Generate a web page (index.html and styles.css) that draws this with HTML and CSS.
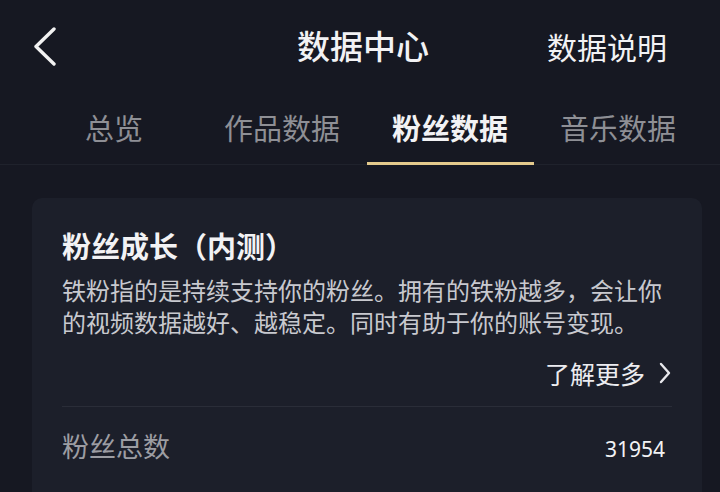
FILE: index.html
```html
<!DOCTYPE html>
<html>
<head>
    <meta charset="utf-8">
    <title>数据中心</title>
    <link rel="stylesheet" href="styles.css">
</head>
<body>
    <div class="page">
        <header class="nav-bar">
            <a class="back-btn" href="#">
                <svg width="24" height="40" viewBox="0 0 24 40">
                    <polyline points="21,3 3,20.5 21,38" fill="none" stroke="#f2f2f2" stroke-width="3.4" stroke-linecap="round" stroke-linejoin="round"/>
                </svg>
            </a>
            <h1 class="nav-title">数据中心</h1>
            <a class="nav-link" href="#">数据说明</a>
        </header>

        <nav class="tabs">
            <div class="tab">总览</div>
            <div class="tab">作品数据</div>
            <div class="tab active">粉丝数据</div>
            <div class="tab">音乐数据</div>
        </nav>

        <section class="card">
            <h2 class="card-title">粉丝成长（内测）</h2>
            <p class="card-desc">铁粉指的是持续支持你的粉丝。拥有的铁粉越多，会让你的视频数据越好、越稳定。同时有助于你的账号变现。</p>
            <div class="more-row">
                <a class="more-link" href="#">了解更多
                    <svg width="14" height="22" viewBox="0 0 14 22">
                        <polyline points="3,2 11,11 3,20" fill="none" stroke="#e8e8ec" stroke-width="2.4" stroke-linecap="round" stroke-linejoin="round"/>
                    </svg>
                </a>
            </div>
            <div class="stat-row">
                <span class="stat-label">粉丝总数</span>
                <span class="stat-value">31954</span>
            </div>
        </section>
    </div>
</body>
</html>
```

FILE: styles.css
```css
:root {
    --bg: #161822;
    --card: #1c1f2a;
    --text: #f2f2f4;
    --muted: #8e8f95;
    --gold: #e3c98c;
}
html, body {
    margin: 0;
    padding: 0;
}
body {
    background: var(--bg);
    color: var(--text);
    font-family: "Noto Sans CJK SC", "Noto Sans", sans-serif;
    width: 720px;
    height: 492px;
    overflow: hidden;
}
a {
    color: inherit;
    text-decoration: none;
}
.nav-bar {
    display: flex;
    align-items: center;
    height: 92px;
    padding: 0 53px 0 33px;
}
.back-btn {
    display: flex;
    width: 24px;
    height: 40px;
}
.nav-title {
    flex: 1;
    margin: -2px 0 0 122px;
    text-align: center;
    font-size: 33px;
    font-weight: 500;
    line-height: 40px;
}
.nav-link {
    font-size: 30px;
    line-height: 40px;
}
.tabs {
    display: flex;
    padding: 0 18px 0 30px;
    border-bottom: 1px solid #1f222c;
}
.tab {
    position: relative;
    width: 168px;
    padding: 17px 0 19px;
    text-align: center;
    font-size: 29px;
    line-height: 36px;
    color: var(--muted);
}
.tab.active {
    color: var(--text);
    font-weight: 700;
}
.tab.active::after {
    content: "";
    position: absolute;
    left: 1px;
    right: 0;
    bottom: -1px;
    height: 3px;
    background: var(--gold);
}
.card {
    margin: 33px 18px 0 32px;
    padding: 27px 30px 40px;
    background: var(--card);
    border-radius: 10px;
}
.card-title {
    margin: 0;
    font-size: 29px;
    font-weight: 700;
    line-height: 40px;
}
.card-desc {
    margin: 9px 0 0;
    font-size: 24px;
    line-height: 32px;
    color: #c8c9cf;
}
.more-row {
    display: flex;
    justify-content: flex-end;
    margin-top: 19px;
    padding-bottom: 17px;
    border-bottom: 1px solid #2a2d38;
}
.more-link {
    display: flex;
    align-items: center;
    gap: 13px;
    font-size: 25px;
    line-height: 32px;
    color: #ececf0;
}
.stat-row {
    display: flex;
    justify-content: space-between;
    align-items: baseline;
    padding: 19px 7px 0 0;
}
.stat-label {
    font-size: 27px;
    line-height: 40px;
    color: #9c9da3;
}
.stat-value {
    font-family: "Noto Sans", "Liberation Sans", sans-serif;
    font-size: 21px;
    color: var(--text);
}
```
